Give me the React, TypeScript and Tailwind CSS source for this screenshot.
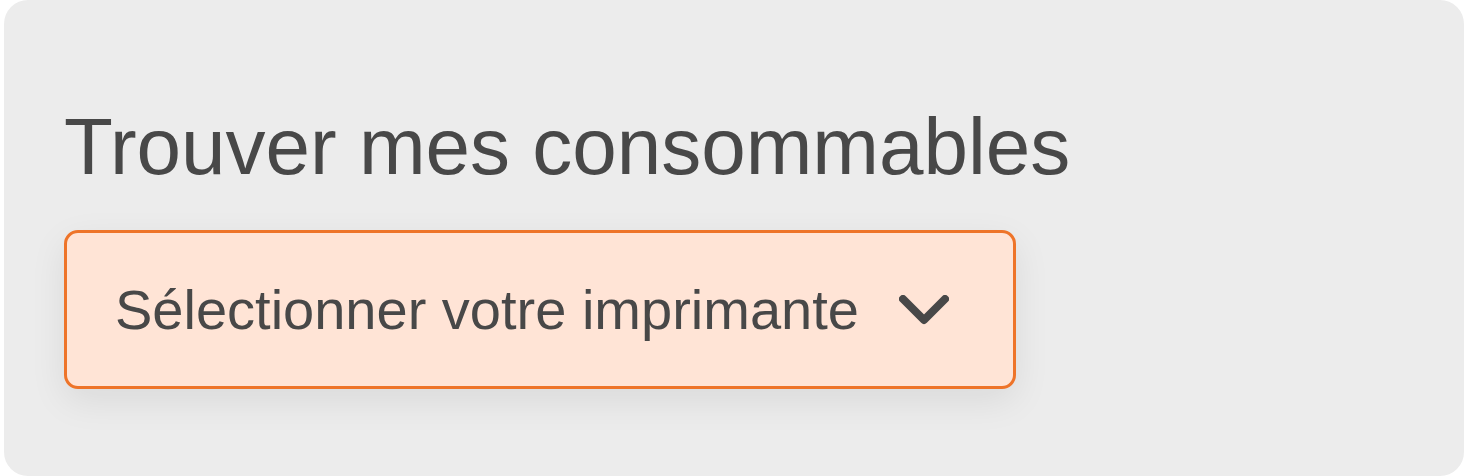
export default function App() {
  return (
    <div className="h-[476px] w-[1464px] bg-white pl-[4px]" style={{ fontFamily: '"Liberation Sans", Arial, sans-serif' }}>
      <div className="flex h-[476px] w-[1460px] flex-col items-start rounded-[24px] bg-[#ececec] pl-[60px] pt-[107px]">
        <h1 className="text-[80px] leading-none font-normal whitespace-nowrap text-[#484848]">Trouver mes consommables</h1>
        <button
          type="button"
          className="mt-[43px] flex h-[159px] w-[952px] items-center justify-start gap-[40px] rounded-[14px] border-[3px] border-[#ee7429] bg-[#ffe4d6] px-[48px] text-left shadow-[0_12px_36px_rgba(0,0,0,0.08)]"
        >
          <span className="text-[56px] leading-none whitespace-nowrap text-[#484848]">Sélectionner votre imprimante</span>
          <svg width="50" height="30" viewBox="0 0 50 30" fill="none" className="shrink-0">
            <path d="M4 4 L25 25 L46 4" stroke="#484848" strokeWidth="8" strokeLinecap="round" strokeLinejoin="round" />
          </svg>
        </button>
      </div>
    </div>
  );
}
